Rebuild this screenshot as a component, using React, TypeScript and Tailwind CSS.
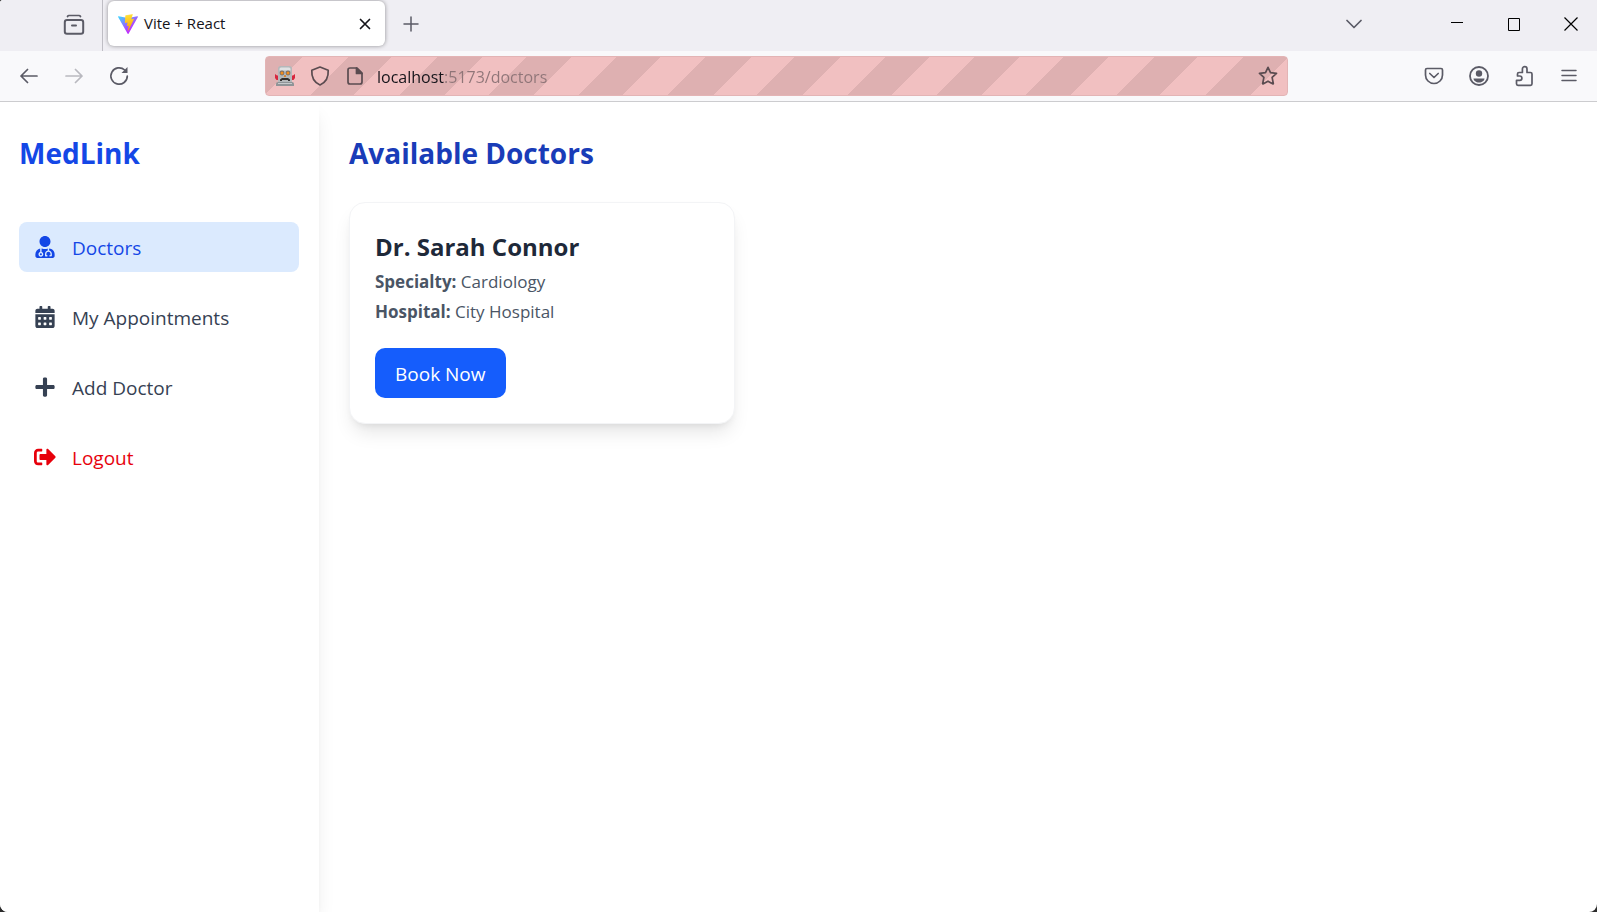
import { FaUserMd, FaCalendarAlt, FaPlus, FaSignOutAlt } from "react-icons/fa";
import type { ReactNode } from "react";

function ToolButton({ label, children, className = "" }: { label: string; children: ReactNode; className?: string }) {
  return (
    <button type="button" aria-label={label} className={`flex size-8 items-center justify-center text-[#5b5b66] ${className}`}>
      {children}
    </button>
  );
}

const line = { fill: "none", stroke: "currentColor", strokeWidth: 1.7, strokeLinecap: "round", strokeLinejoin: "round" } as const;

function ViteLogo() {
  return (
    <svg width="20" height="20" viewBox="0 0 256 257" aria-hidden="true">
      <defs>
        <linearGradient id="va" x1="-.8%" x2="57.6%" y1="7.7%" y2="78.4%">
          <stop offset="0%" stopColor="#41D1FF" />
          <stop offset="100%" stopColor="#BD34FE" />
        </linearGradient>
        <linearGradient id="vb" x1="43.4%" x2="50.3%" y1="2.2%" y2="89%">
          <stop offset="0%" stopColor="#FFEA83" />
          <stop offset="8.3%" stopColor="#FFDD35" />
          <stop offset="100%" stopColor="#FFA800" />
        </linearGradient>
      </defs>
      <path fill="url(#va)" d="M255.153 37.938 134.897 252.976c-2.483 4.44-8.862 4.466-11.382.048L.875 37.958c-2.746-4.814 1.371-10.646 6.827-9.67l120.385 21.517a6.537 6.537 0 0 0 2.322-.004l117.867-21.483c5.438-.991 9.574 4.796 6.877 9.62Z" />
      <path fill="url(#vb)" d="M185.432.063 96.44 17.501a3.268 3.268 0 0 0-2.634 3.014l-5.474 92.456a3.268 3.268 0 0 0 3.997 3.378l24.777-5.718c2.318-.535 4.413 1.507 3.936 3.838l-7.361 36.047c-.495 2.426 1.782 4.5 4.151 3.78l15.304-4.649c2.372-.72 4.652 1.36 4.15 3.788l-11.698 56.621c-.732 3.542 3.979 5.473 5.943 2.437l1.313-2.028 72.516-144.72c1.215-2.423-.88-5.186-3.54-4.672l-25.505 4.922c-2.396.462-4.435-1.77-3.759-4.114l16.646-57.705c.677-2.35-1.37-4.583-3.769-4.113Z" />
    </svg>
  );
}

function RobotIcon() {
  return (
    <svg width="20" height="20" viewBox="0 0 20 20" aria-hidden="true">
      <path d="M0 8l2 1.500h1V14H1.500L0 12zM20 8l-2 1.500h-1V14h1.500L20 12z" fill="#d7263d" />
      <path d="M3 2.500Q3 0 5.500 0h9Q17 0 17 2.500V16H3z" fill="#b4b8ba" />
      <path d="M4.500 3Q4.500 1.500 6 1.500h8q1.500 0 1.500 1.500v1.500h-11z" fill="#dfe2e3" />
      <path d="M1 18q0-2 2-2h14q2 0 2 2v2H1z" fill="#8f9497" />
      <path d="M3 17.500h14" stroke="#c6cacc" />
      <circle cx="7" cy="7" r="2.400" fill="#77706c" />
      <circle cx="13" cy="7" r="2.400" fill="#77706c" />
      <circle cx="7" cy="7" r="1.500" fill="#f28c1c" />
      <circle cx="13" cy="7" r="1.500" fill="#f28c1c" />
      <path d="M9.300 9h1.400l.5 2H8.800z" fill="#d9822b" />
      <path d="M5 15v-1.500L7 12h6l2 1.500V15h-2v-1H7v1z" fill="#33302f" />
    </svg>
  );
}

function TabStrip() {
  return (
    <div className="flex h-[51px] items-start bg-[#efeef3]">
      <div className="flex h-full w-[103px] shrink-0 items-center justify-end border-r border-[#bebdc4] pr-3 pb-0.5">
        <ToolButton label="View recent browsing">
          <svg width="22" height="22" viewBox="0 0 22 22" aria-hidden="true" {...line}>
            <path d="M4.500 2.500q.5-1 1.500-1h10q1 0 1.500 1" />
            <rect x="1.800" y="6" width="18.400" height="13.700" rx="2.200" strokeWidth="2" />
            <path d="M9 11.500h4" strokeWidth="2" />
          </svg>
        </ToolButton>
      </div>
      <div className="mt-px ml-[5px] flex h-[45px] w-[277px] shrink-0 items-center rounded-md bg-white pr-1 pl-2.5 shadow-[0_0_4px_rgba(0,0,0,0.4)]">
        <ViteLogo />
        <span className="ml-1.5 grow text-[15px] text-[#15141a]">Vite + React</span>
        <button type="button" aria-label="Close tab" className="flex size-8 items-center justify-center text-[#15141a]">
          <svg width="12" height="12" viewBox="0 0 12 12" aria-hidden="true" {...line}>
            <path d="M1.500 1.500l9 9M10.500 1.500l-9 9" />
          </svg>
        </button>
      </div>
      <div className="flex h-12 grow items-center">
        <ToolButton label="New tab" className="ml-2.5">
          <svg width="16" height="16" viewBox="0 0 16 16" aria-hidden="true" {...line} strokeWidth="1.500">
            <path d="M8 1v14M1 8h14" />
          </svg>
        </ToolButton>
        <ToolButton label="List all tabs" className="mr-14 ml-auto">
          <svg width="16" height="10" viewBox="0 0 16 10" aria-hidden="true" {...line}>
            <path d="M1 1.500l7 7 7-7" />
          </svg>
        </ToolButton>
        <div className="flex h-full items-center text-black">
          <button type="button" aria-label="Minimize" className="flex h-full w-[57px] items-center justify-center pb-1 pl-1">
            <svg width="12" height="12" viewBox="0 0 12 12" aria-hidden="true"><path d="M0 6.500h12" stroke="currentColor" /></svg>
          </button>
          <button type="button" aria-label="Maximize" className="flex h-full w-[57px] items-center justify-center pl-1">
            <svg width="12" height="13" viewBox="0 0 12 13" aria-hidden="true"><path d="M.5.5h11v12H.5z" fill="none" stroke="currentColor" /></svg>
          </button>
          <button type="button" aria-label="Close" className="flex h-full w-[57px] items-center justify-center pl-1">
            <svg width="14" height="14" viewBox="0 0 14 14" aria-hidden="true"><path d="M.5.5l13 13M13.500.5l-13 13" stroke="currentColor" strokeWidth="1.200" /></svg>
          </button>
        </div>
      </div>
    </div>
  );
}

function NavToolbar() {
  return (
    <div className="flex h-[51px] items-center border-b border-[#cccccf] bg-[#f9f9fb] pr-3 pl-[13px]">
      <div className="flex w-[252px] shrink-0 gap-[13px]">
        <ToolButton label="Back">
          <svg width="18" height="16" viewBox="0 0 18 16" aria-hidden="true" {...line}><path d="M17 8H1M7.500 1.500L1 8l6.500 6.500" /></svg>
        </ToolButton>
        <ToolButton label="Forward" className="opacity-40">
          <svg width="18" height="16" viewBox="0 0 18 16" aria-hidden="true" {...line}><path d="M1 8h16M10.500 1.500L17 8l-6.500 6.500" /></svg>
        </ToolButton>
        <ToolButton label="Reload">
          <svg width="20" height="20" viewBox="0 0 20 20" aria-hidden="true" {...line}>
            <path d="M18.300 10a8.200 8.200 0 1 1-2.600-6" />
            <path d="M18.500 1v6h-6z" fill="currentColor" stroke="none" />
          </svg>
        </ToolButton>
      </div>
      <div className="flex h-10 w-[1023px] min-w-0 items-center rounded border border-[#e3b4b5] bg-[repeating-linear-gradient(135deg,#deb0b1_0px,#deb0b1_26px,#f1c0c1_26px,#f1c0c1_58px,#deb0b1_58px,#deb0b1_89px,#f1c0c1_89px,#f1c0c1_121px,#deb0b1_121px,#deb0b1_153px,#f1c0c1_153px,#f1c0c1_184px,#deb0b1_184px,#deb0b1_190px)] pr-[3px] pl-[9px] text-[#5a4b50]">
        <RobotIcon />
        <button type="button" aria-label="Tracking protection" className="ml-[15px]">
          <svg width="20" height="20" viewBox="0 0 20 20" aria-hidden="true" {...line}>
            <path d="M10 1l8.200 3.200c.4 6.300-2.200 12-8.200 14.800C4 16.200 1.400 10.500 1.800 4.200z" />
          </svg>
        </button>
        <button type="button" aria-label="Site information" className="ml-4">
          <svg width="18" height="18" viewBox="0 0 18 18" aria-hidden="true" {...line}>
            <path d="M11 1H4Q2 1 2 3v12q0 2 2 2h10q2 0 2-2V6z" />
            <path d="M10.500 1v5.500H16z" fill="currentColor" />
          </svg>
        </button>
        <input
          aria-label="Address"
          defaultValue="localhost:5173/doctors"
          className="ml-[13px] min-w-0 grow bg-[linear-gradient(to_right,#15141a_68px,#8f7578_68px)] bg-clip-text pt-0.5 text-base text-transparent caret-black outline-none"
        />
        <ToolButton label="Bookmark this page">
          <svg width="20" height="20" viewBox="0 0 20 20" aria-hidden="true" {...line} stroke="#5a4b50">
            <path d="M10 1.300l2.500 5.400 6 .7-4.400 4 1.200 5.900q.2 1-.7.500L10 15.200l-4.600 2.600q-.9.500-.7-.5l1.200-5.900-4.400-4 6-.7z" />
          </svg>
        </ToolButton>
      </div>
      <div className="ml-auto flex gap-[13px]">
        <ToolButton label="Save to Pocket">
          <svg width="20" height="20" viewBox="0 0 20 20" aria-hidden="true" {...line}>
            <path d="M3 2.500h14q1.500 0 1.500 1.500v5a8.500 8.500 0 0 1-17 0V4q0-1.500 1.500-1.500z" />
            <path d="M5.800 7.500L10 11.500l4.200-4" />
          </svg>
        </ToolButton>
        <ToolButton label="Account">
          <svg width="20" height="20" viewBox="0 0 20 20" aria-hidden="true">
            <circle cx="10" cy="10" r="9" fill="none" stroke="currentColor" strokeWidth="1.800" />
            <circle cx="10" cy="7.500" r="3.200" fill="currentColor" />
            <path d="M4.500 12.500h11c0 2-2.500 4-5.500 4s-5.500-2-5.500-4z" fill="currentColor" />
          </svg>
        </ToolButton>
        <ToolButton label="Extensions">
          <svg width="20" height="22" viewBox="0 0 20 22" aria-hidden="true" {...line}>
            <path d="M4 20.300h12.500q1.500 0 1.500-1.500V9q0-1.500-1.500-1.500H13V4a2.300 2.300 0 0 0-4.600 0v3.500H5Q3.500 7.500 3.500 9v2h2.200a2.200 2.200 0 0 1 0 4.400H2.500v3.400q0 1.500 1.500 1.500z" />
          </svg>
        </ToolButton>
        <ToolButton label="Open application menu">
          <svg width="16" height="14" viewBox="0 0 16 14" aria-hidden="true" {...line} strokeWidth="1.500">
            <path d="M1 1.500h14M1 6.500h14M1 11.500h14" />
          </svg>
        </ToolButton>
      </div>
    </div>
  );
}

const navItems = [
  { label: "Doctors", icon: FaUserMd, style: "bg-blue-100 text-blue-700" },
  { label: "My Appointments", icon: FaCalendarAlt, style: "text-gray-700" },
  { label: "Add Doctor", icon: FaPlus, style: "text-gray-700" },
];

function Sidebar() {
  return (
    <aside className="z-10 w-[319px] shrink-0 bg-white pt-8 pr-5 pl-[19px] shadow-[0_12px_19px_-4px_rgba(0,0,0,0.1),0_5px_8px_-5px_rgba(0,0,0,0.1)]">
      <h2 className="text-[28px] leading-[38px] font-bold text-blue-700">MedLink</h2>
      <nav className="mt-[50px] flex flex-col gap-5">
        {navItems.map(({ label, icon: Icon, style }) => (
          <a key={label} href="#" className={`flex h-[50px] items-center gap-4 rounded-lg px-[15px] text-[19px] ${style}`}>
            <Icon className="size-[22px]" />
            <span className="pt-[3px]">{label}</span>
          </a>
        ))}
        <button type="button" className="flex h-[50px] items-center gap-4 rounded-lg px-[15px] text-[19px] text-red-600">
          <FaSignOutAlt className="size-[22px]" />
          <span className="pt-[3px]">Logout</span>
        </button>
      </nav>
    </aside>
  );
}

function DoctorCard() {
  return (
    <article className="rounded-2xl border border-gray-100 bg-white p-[25px] shadow-[0_12px_19px_-4px_rgba(0,0,0,0.1),0_5px_8px_-5px_rgba(0,0,0,0.1)]">
      <h2 className="text-2xl leading-[38px] font-bold text-gray-800">Dr. Sarah Connor</h2>
      <div className="pt-px text-[17px] leading-[30px] text-gray-600">
        <p><strong>Specialty:</strong> Cardiology</p>
        <p><strong>Hospital:</strong> City Hospital</p>
      </div>
      <button type="button" className="mt-[21px] h-[50px] rounded-[10px] bg-[#155dfc] px-5 pt-[3px] text-[19px] text-white">Book Now</button>
    </article>
  );
}

export default function App() {
  return (
    <div className="bg-[#2b2b2b]">
      <div className="flex min-h-screen flex-col overflow-hidden rounded-tl-[3px] rounded-b-lg bg-white font-['Open_Sans',sans-serif]">
        <header className="relative z-20">
          <TabStrip />
          <NavToolbar />
        </header>
        <div className="flex grow">
          <Sidebar />
          <main className="grow px-[30px] pt-8">
            <h1 className="text-[28px] leading-[38px] font-bold text-blue-800">Available Doctors</h1>
            <div className="mt-[30px] grid grid-cols-3 gap-[30px]">
              <DoctorCard />
            </div>
          </main>
        </div>
      </div>
    </div>
  );
}
